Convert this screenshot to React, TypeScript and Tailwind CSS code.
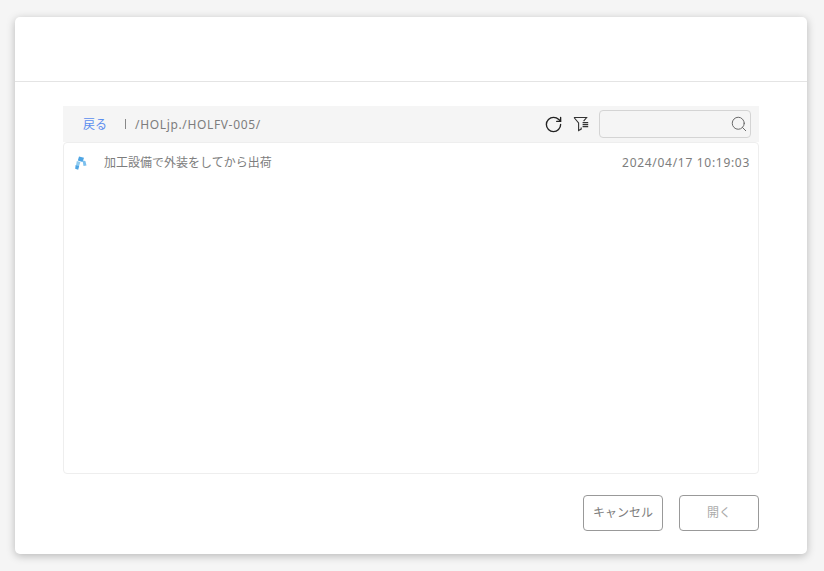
import { RotateCw, Search } from 'lucide-react';

const font = { fontFamily: '"Noto Sans", "Noto Sans CJK JP", sans-serif' };

function FilterIcon() {
  return (
    <svg width="16" height="16" viewBox="0 0 16 16" fill="none" stroke="#333" strokeWidth="1.1">
      <path d="M1 1.5h12.6l-3 3.6" />
      <path d="M1 1.5l4.6 5.4v7.6l2.6-1.4v-1.6" />
      <path d="M9.6 6.6h5.6M9.6 8.6h5.6M9.6 10.6h5.6" />
    </svg>
  );
}

function FileIcon() {
  return (
    <svg width="12" height="14" viewBox="0 0 12 14">
      <path d="M4 0.5l5 1.2-1.4 4.2-4.8-1.4z" fill="#4ea5e4" />
      <path d="M7.6 4.6l2.8 0.4 1.1 4.6-3 0.5z" fill="#7cc0ee" />
      <path d="M1.8 5l3.6 1-1.4 4.2-3-1z" fill="#8ecbf0" />
      <path d="M0.6 9l3.6 1-1 3.8-3-1z" fill="#4ea5e4" />
    </svg>
  );
}

export default function App() {
  return (
    <div className="w-[824px] h-[571px] bg-[#f5f5f5] pt-[17px] pl-[15px]" style={font}>
      <div className="w-[792px] h-[537px] bg-white rounded-[5px] shadow-[0_2px_8px_rgba(0,0,0,0.25)] flex flex-col">
        {/* Header */}
        <div className="h-[65px] border-b border-[#e4e4e4]"></div>

        {/* Content */}
        <div className="flex-1 flex flex-col px-[48px] pt-[24px]">
          <div className="h-[36px] bg-[#f5f5f5] flex items-center text-[12px] text-[#7d7d7d]">
            <span className="ml-[20px] text-[#5b8def] translate-y-px">戻る</span>
            <span className="ml-[18px] w-px h-[10px] bg-[#888]"></span>
            <span className="ml-[9px] tracking-[0.65px] translate-y-px">/HOLjp./HOLFV-005/</span>
            <div className="ml-auto flex items-center">
              <RotateCw size={19} strokeWidth={1.7} color="#222" />
              <span className="ml-[10px] flex"><FilterIcon /></span>
              <div className="ml-[10px] mr-[8px] w-[152px] h-[28px] border border-[#d4d4d4] rounded-[4px] flex items-center justify-end pr-[2px]">
                <Search size={18} strokeWidth={1.3} color="#666" />
              </div>
            </div>
          </div>

          <div className="h-[332px] border border-[#eeeeee] rounded-[4px]">
            <div className="flex items-center h-[40px] text-[12px] text-[#7d7d7d]">
              <span className="ml-[11px] flex"><FileIcon /></span>
              <span className="ml-[17px]">加工設備で外装をしてから出荷</span>
              <span className="ml-auto mr-[8px] tracking-[0.7px]">2024/04/17 10:19:03</span>
            </div>
          </div>

          <div className="flex justify-end gap-[16px] mt-[21px]">
            <button className="w-[80px] h-[36px] border border-[#999] rounded-[4px] text-[12px] text-[#7d7d7d]">キャンセル</button>
            <button className="w-[80px] h-[36px] border border-[#999] rounded-[4px] text-[12px] text-[#aaa]">開く</button>
          </div>
        </div>
      </div>
    </div>
  );
}
